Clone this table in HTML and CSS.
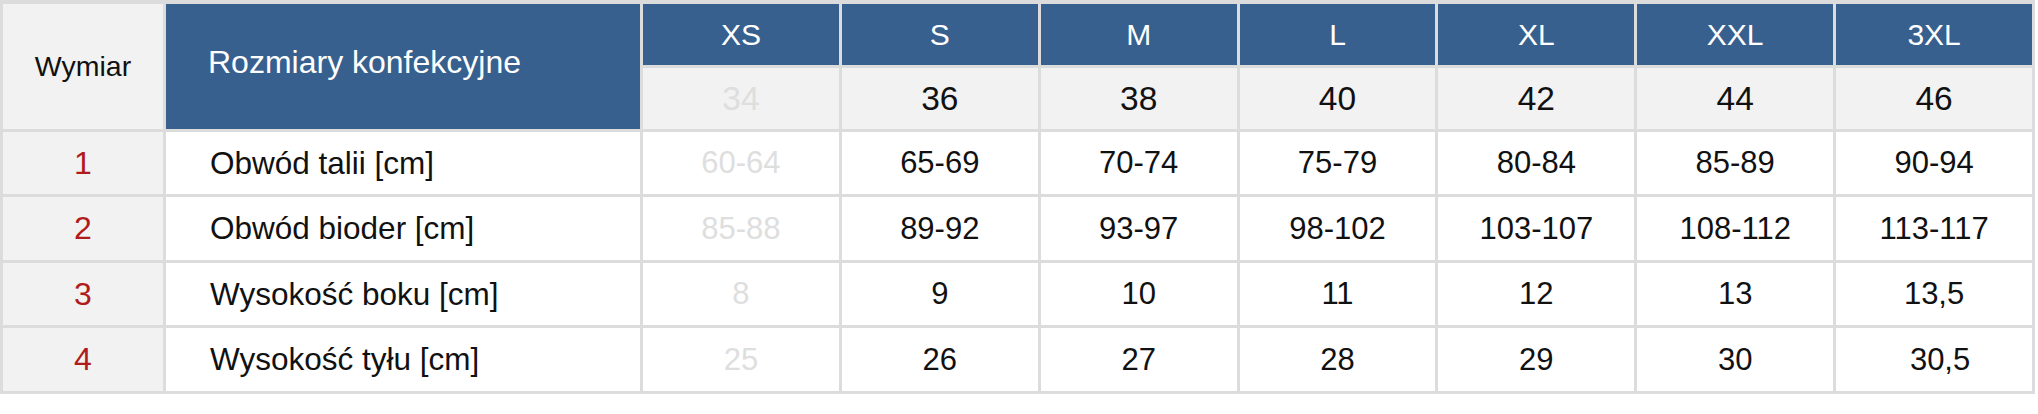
FILE: index.html
```html
<!DOCTYPE html>
<html lang="pl">
<head>
<meta charset="utf-8">
<title>Tabela rozmiarów</title>
<link rel="stylesheet" href="styles.css">
</head>
<body>
<div class="chart">
  <div class="cell corner">Wymiar</div>
  <div class="cell title">Rozmiary konfekcyjne</div>
  <div class="cell size">XS</div>
  <div class="cell size">S</div>
  <div class="cell size">M</div>
  <div class="cell size">L</div>
  <div class="cell size">XL</div>
  <div class="cell size">XXL</div>
  <div class="cell size">3XL</div>

  <div class="cell num faded">34</div>
  <div class="cell num">36</div>
  <div class="cell num">38</div>
  <div class="cell num">40</div>
  <div class="cell num">42</div>
  <div class="cell num">44</div>
  <div class="cell num">46</div>

  <div class="cell idx">1</div>
  <div class="cell label">Obwód talii [cm]</div>
  <div class="cell val faded">60-64</div>
  <div class="cell val">65-69</div>
  <div class="cell val">70-74</div>
  <div class="cell val">75-79</div>
  <div class="cell val">80-84</div>
  <div class="cell val">85-89</div>
  <div class="cell val">90-94</div>

  <div class="cell idx">2</div>
  <div class="cell label">Obwód bioder [cm]</div>
  <div class="cell val faded">85-88</div>
  <div class="cell val">89-92</div>
  <div class="cell val">93-97</div>
  <div class="cell val">98-102</div>
  <div class="cell val">103-107</div>
  <div class="cell val">108-112</div>
  <div class="cell val">113-117</div>

  <div class="cell idx">3</div>
  <div class="cell label">Wysokość boku [cm]</div>
  <div class="cell val faded">8</div>
  <div class="cell val">9</div>
  <div class="cell val">10</div>
  <div class="cell val">11</div>
  <div class="cell val">12</div>
  <div class="cell val">13</div>
  <div class="cell val">13,5</div>

  <div class="cell idx">4</div>
  <div class="cell label">Wysokość tyłu [cm]</div>
  <div class="cell val faded">25</div>
  <div class="cell val">26</div>
  <div class="cell val">27</div>
  <div class="cell val">28</div>
  <div class="cell val">29</div>
  <div class="cell val">30</div>
  <div class="cell val shift">30,5</div>
</div>
</body>
</html>
```

FILE: styles.css
```css
html, body {
  margin: 0;
  padding: 0;
  background: #ffffff;
}

body {
  font-family: "Liberation Sans", Arial, Helvetica, sans-serif;
  color: #111111;
}

.chart {
  width: 2035px;
  box-sizing: border-box;
  display: grid;
  grid-template-columns: 160px 474px repeat(7, 1fr);
  grid-template-rows: 61px 61px 62px 63px 62px 63px;
  gap: 3px;
  padding: 4px 3px 3px 3px;
  background: #dcdcdc;
}

.cell {
  display: flex;
  align-items: center;
  justify-content: center;
  background: #ffffff;
  white-space: nowrap;
}

.corner {
  grid-row: 1 / span 2;
  background: #f2f2f2;
  font-size: 28.5px;
  color: #111111;
}

.title {
  grid-row: 1 / span 2;
  background: #37608f;
  color: #ffffff;
  font-size: 32px;
  justify-content: flex-start;
  padding-left: 42px;
  padding-bottom: 8px;
}

.size {
  background: #37608f;
  color: #ffffff;
  font-size: 30px;
}

.num {
  background: #f2f2f2;
  font-size: 33.5px;
  color: #111111;
}

.idx {
  background: #f2f2f2;
  color: #b01b1b;
  font-size: 32px;
}

.label {
  justify-content: flex-start;
  padding-left: 44px;
  font-size: 31.5px;
}

.val {
  font-size: 31px;
}

.faded {
  color: #dedede;
}

.shift {
  padding-left: 12px;
}
```
